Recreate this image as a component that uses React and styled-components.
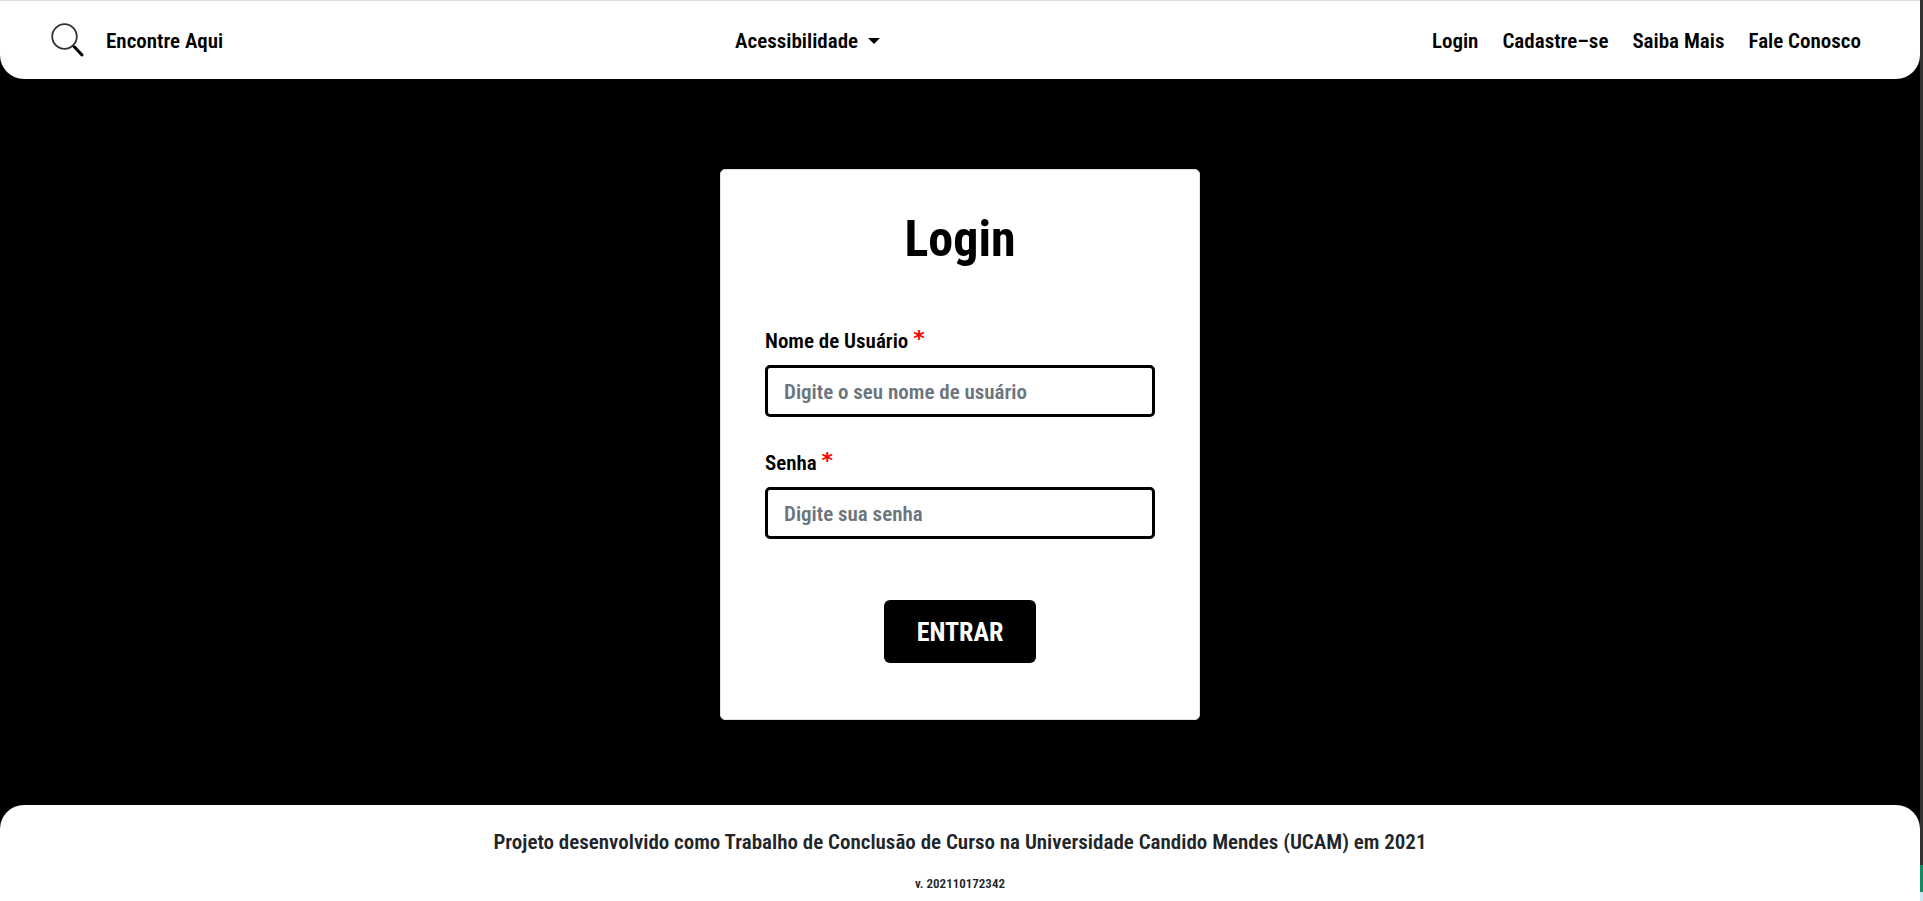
import React from 'react';
import styled, { createGlobalStyle } from 'styled-components';

const GlobalStyle = createGlobalStyle`
  *, *::before, *::after { box-sizing: border-box; }
  body {
    margin: 0;
    background: #000;
    color: #212529;
    font-family: "Roboto Condensed", Roboto, "Liberation Sans", sans-serif;
    font-size: 21px;
    line-height: 30px;
    font-weight: 600;
  }
`;

const Window = styled.div`
  display: flex;
  min-height: 100vh;
`;

const Page = styled.div`
  flex: 1;
  min-width: 0;
  display: flex;
  flex-direction: column;
`;

const Edge = styled.div`
  flex: 0 0 3px;
  display: flex;
  flex-direction: column;
  background: #333;
`;

const EdgeBand = styled.div`
  height: ${({ $height }) => $height}px;
  margin-top: ${({ $push }) => ($push ? 'auto' : '0')};
  background: ${({ $color }) => $color};
`;

const Header = styled.header`
  display: flex;
  justify-content: space-between;
  align-items: center;
  min-height: 79px;
  padding: 2px 59px 0 48px;
  background: #fff;
  border-top: 1px solid #dcdcdc;
  border-radius: 0 0 24px 24px;
`;

const NavLink = styled.a`
  color: #000;
  text-decoration: none;
  white-space: nowrap;
`;

const Brand = styled(NavLink)`
  display: flex;
  align-items: center;
  gap: 20px;
`;

const Nav = styled.nav`
  display: flex;
  gap: 24px;
`;

const MenuButton = styled.button`
  display: flex;
  align-items: center;
  gap: 10px;
  margin-right: 40px;
  padding: 0;
  border: 0;
  background: none;
  color: #000;
  font: inherit;
  cursor: pointer;
`;

const Caret = styled.span`
  border: 6px solid transparent;
  border-top-color: #000;
  border-bottom: 0;
`;

const Main = styled.main`
  flex: 1;
  display: flex;
  align-items: flex-start;
  justify-content: center;
  padding: 90px 16px 85px;
`;

const Card = styled.form`
  display: flex;
  flex-direction: column;
  width: 480px;
  padding: 32px 44px 56px;
  background: #fff;
  border: 1px solid #dfdfdf;
  border-radius: 5px;
`;

const Title = styled.h1`
  margin: 0 0 50px;
  color: #000;
  font-size: 50px;
  line-height: 74px;
  text-align: center;
`;

const Field = styled.div`
  display: flex;
  flex-direction: column;
  gap: 9px;
  margin-bottom: ${({ $last }) => ($last ? 61 : 31)}px;
`;

const Label = styled.label`
  color: #000;
`;

const Required = styled.span`
  color: #f00;
  font-family: "DejaVu Sans", sans-serif;
  font-size: 22px;
  line-height: 1;
  vertical-align: 2px;
`;

const Input = styled.input`
  width: 100%;
  height: 52px;
  padding: 2px 16px 0;
  border: 3px solid #000;
  border-radius: 5px;
  background: #fff;
  color: #000;
  font: inherit;

  &::placeholder { color: #6c757d; opacity: 1; }
`;

const Submit = styled.button`
  align-self: center;
  padding: 13px 33px 11px;
  border: 0;
  border-radius: 6px;
  background: #000;
  color: #fff;
  font: inherit;
  font-size: 26px;
  font-weight: 700;
  line-height: 39px;
  cursor: pointer;
`;

const Footer = styled.footer`
  display: flex;
  flex-direction: column;
  align-items: center;
  gap: 14px;
  padding: 22px 16px 4px;
  background: #fff;
  border-radius: 24px 24px 0 0;
`;

const FooterText = styled.p`
  margin: 0;
`;

const Version = styled.small`
  font-size: 13px;
  line-height: 26px;
`;

function SearchIcon() {
  return (
    <svg width="38" height="38" viewBox="0 0 38 38" fill="none" aria-hidden="true">
      <circle cx="16.5" cy="14.5" r="12.3" stroke="#333" strokeWidth="1.8" />
      <path d="M24.5 23.5l2 2" stroke="#222" strokeWidth="2" />
      <path d="M26.5 25l7.5 8" stroke="#000" strokeWidth="3" strokeLinecap="round" />
    </svg>
  );
}

function FormField({ id, label, last, ...rest }) {
  return (
    <Field $last={last}>
      <Label htmlFor={id}>
        {label} <Required>*</Required>
      </Label>
      <Input id={id} name={id} required {...rest} />
    </Field>
  );
}

export default function App() {
  return (
    <>
      <GlobalStyle />
      <Window>
        <Page>
          <Header>
            <Brand href="#inicio">
              <SearchIcon />
              Encontre Aqui
            </Brand>
            <MenuButton type="button" aria-haspopup="true">
              Acessibilidade
              <Caret />
            </MenuButton>
            <Nav>
              <NavLink href="#login">Login</NavLink>
              <NavLink href="#cadastro">Cadastre–se</NavLink>
              <NavLink href="#saiba-mais">Saiba Mais</NavLink>
              <NavLink href="#contato">Fale Conosco</NavLink>
            </Nav>
          </Header>
          <Main>
            <Card>
              <Title>Login</Title>
              <FormField id="usuario" label="Nome de Usuário" type="text" placeholder="Digite o seu nome de usuário" />
              <FormField id="senha" label="Senha" type="password" placeholder="Digite sua senha" last />
              <Submit type="submit">ENTRAR</Submit>
            </Card>
          </Main>
          <Footer>
            <FooterText>
              Projeto desenvolvido como Trabalho de Conclusão de Curso na Universidade Candido Mendes (UCAM) em 2021
            </FooterText>
            <Version>v. 202110172342</Version>
          </Footer>
        </Page>
        <Edge>
          <EdgeBand $push $height={27} $color="#168a60" />
          <EdgeBand $height={9} $color="#cfe8f0" />
        </Edge>
      </Window>
    </>
  );
}
